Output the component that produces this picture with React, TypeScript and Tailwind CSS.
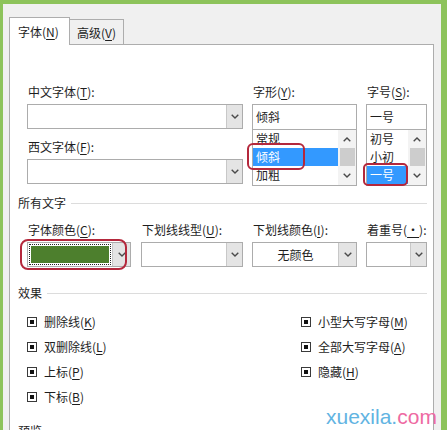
import type { ReactNode } from "react";

const ink = "text-[#1e1e1e]";

function Key({ k }: { k: string }) {
  return (
    <>
      (<span className="underline underline-offset-[2px]">{k}</span>)
    </>
  );
}

function Chevron({ up = false }: { up?: boolean }) {
  return (
    <svg width="8" height="5" viewBox="0 0 8 5" className={up ? "rotate-180" : ""}>
      <path d="M0.7 0.8 L4 4 L7.3 0.8" fill="none" stroke="#4a4a4a" strokeWidth="1.4" />
    </svg>
  );
}

function DropButton({ w = "w-[16px]" }: { w?: string }) {
  return (
    <div className={`${w} flex shrink-0 items-center justify-center border-l border-[#c8c8c8] bg-[#e4e4e4]`}>
      <Chevron />
    </div>
  );
}

function Combo({ children, className = "" }: { children?: ReactNode; className?: string }) {
  return (
    <div className={`flex h-[25px] border border-[#acacac] bg-white ${className}`}>
      <div className="flex flex-1 items-center">{children}</div>
      <DropButton />
    </div>
  );
}

function ScrollBar() {
  return (
    <div className="flex w-[18px] shrink-0 flex-col items-center bg-[#f3f3f3]">
      <div className="flex h-[18px] items-center">
        <Chevron up />
      </div>
      <div className="h-[18px] w-[15px] bg-[#cdcdcd]" />
      <div className="flex h-[18px] items-center">
        <Chevron />
      </div>
    </div>
  );
}

function ListBox({ items, selected }: { items: string[]; selected: number }) {
  return (
    <div className="flex h-[56px] border border-t-0 border-[#acacac] bg-white">
      <div className="flex flex-1 flex-col">
        {items.map((it, i) => (
          <div
            key={it}
            className={`flex h-[18px] items-center pl-[3px] ${i === selected ? "bg-[#3399ff] text-white" : ""}`}
          >
            {it}
          </div>
        ))}
      </div>
      <ScrollBar />
    </div>
  );
}

function Section({ title, className = "" }: { title: string; className?: string }) {
  return (
    <div className={`ml-[8px] mr-[6px] flex items-center gap-[5px] ${className}`}>
      <span>{title}</span>
      <div className="h-px flex-1 bg-[#dcdcdc]" />
    </div>
  );
}

function Check({ label, k }: { label: string; k: string }) {
  return (
    <div className="flex h-[25px] items-center">
      <div className="flex h-[10px] w-[10px] items-center justify-center border border-[#3a3a3a]">
        <div className="h-[4px] w-[4px] bg-[#111]" />
      </div>
      <span className="ml-[7px]">
        {label}
        <Key k={k} />
      </span>
    </div>
  );
}

export default function App() {
  return (
    <div
      className={`relative h-[430px] w-[447px] overflow-hidden bg-[#8dc35b] pl-[3px] pr-[6px] pt-[4px] font-['Noto_Sans_CJK_SC','Noto_Sans',sans-serif] text-[12px] leading-[16px] ${ink}`}
    >
      <div className="h-[426px] bg-[#f0f0f0] pl-[6px] pr-[7px] pt-[13px]">
        <div className="flex h-[27px] items-end">
          <div className="relative z-10 -mb-px h-[28px] w-[61px] border border-b-0 border-[#adadad] bg-white pl-[8px] pt-[6px]">
            字体<Key k="N" />
          </div>
          <div className="h-[25px] w-[54px] border border-b-0 border-l-0 border-[#adadad] bg-[#f0f0f0] pl-[7px] pt-[5px]">
            高级<Key k="V" />
          </div>
        </div>

        <div className="h-[420px] border border-[#adadad] bg-white">
          {/* font family / style / size */}
          <div className="flex pt-[39px]">
            <div className="ml-[17px] w-[216px]">
              <div className="pl-px">
                中文字体<Key k="T" />:
              </div>
              <Combo className="mt-[4px]" />
              <div className="mt-[10px] pl-px">
                西文字体<Key k="F" />:
              </div>
              <Combo className="mt-[4px]" />
            </div>

            <div className="ml-[9px] w-[105px]">
              <div className="pl-px">
                字形<Key k="Y" />:
              </div>
              <div className="mt-[4px] flex h-[26px] items-center border border-[#acacac] pl-[3px]">倾斜</div>
              <ListBox items={["常规", "倾斜", "加粗"]} selected={1} />
            </div>

            <div className="ml-[9px] w-[61px]">
              <div className="pl-px">
                字号<Key k="S" />:
              </div>
              <div className="mt-[4px] flex h-[26px] items-center border border-[#acacac] pl-[3px]">一号</div>
              <ListBox items={["初号", "小初", "一号"]} selected={2} />
            </div>
          </div>

          <Section title="所有文字" className="mt-[9px]" />

          <div className="mt-[11px] flex">
            <div className="ml-[17px] w-[104px]">
              <div className="pl-px">
                字体颜色<Key k="C" />:
              </div>
              <div className="mt-[4px] flex h-[25px] border border-[#acacac] bg-white">
                <div className="flex-1 p-px">
                  <div className="h-full border border-dotted border-[#222] p-px">
                    <div className="h-full bg-[#4d7f2d]" />
                  </div>
                </div>
                <DropButton w="w-[18px]" />
              </div>
            </div>

            <div className="ml-[10px] w-[102px]">
              <div className="pl-px">
                下划线线型<Key k="U" />:
              </div>
              <Combo className="mt-[4px]" />
            </div>

            <div className="ml-[9px] w-[105px]">
              <div className="pl-px">
                下划线颜色<Key k="I" />:
              </div>
              <div className="mt-[4px] flex h-[25px] border border-[#acacac] bg-white">
                <div className="flex flex-1 items-center justify-center">无颜色</div>
                <DropButton w="w-[18px]" />
              </div>
            </div>

            <div className="ml-[9px] w-[61px]">
              <div className="pl-px">
                着重号<Key k="·" />:
              </div>
              <Combo className="mt-[4px]" />
            </div>
          </div>

          <Section title="效果" className="mt-[18px]" />

          <div className="mt-[8px] flex">
            <div className="ml-[17px] w-[274px]">
              <Check label="删除线" k="K" />
              <Check label="双删除线" k="L" />
              <Check label="上标" k="P" />
              <Check label="下标" k="B" />
            </div>
            <div>
              <Check label="小型大写字母" k="M" />
              <Check label="全部大写字母" k="A" />
              <Check label="隐藏" k="H" />
            </div>
          </div>

          <Section title="预览" className="mt-[14px]" />
        </div>
      </div>

      {/* annotation outlines */}
      <div className="absolute left-[247px] top-[143px] h-[27px] w-[58px] rounded-[6px] border-2 border-[#b4283c]" />
      <div className="absolute left-[363px] top-[163px] h-[23px] w-[45px] rounded-[5px] border-2 border-[#b4283c]" />
      <div className="absolute left-[20px] top-[239px] h-[31px] w-[107px] rounded-[8px] border-2 border-[#b4283c]" />

      {/* watermark */}
      <div className="absolute left-[326px] top-[405px] font-['Liberation_Sans',Arial,sans-serif] text-[21px] leading-[24px]">
        <span className="text-[#62b4e2]">xuexila.</span>
        <span className="text-[#ee6aa2]">com</span>
      </div>
    </div>
  );
}
